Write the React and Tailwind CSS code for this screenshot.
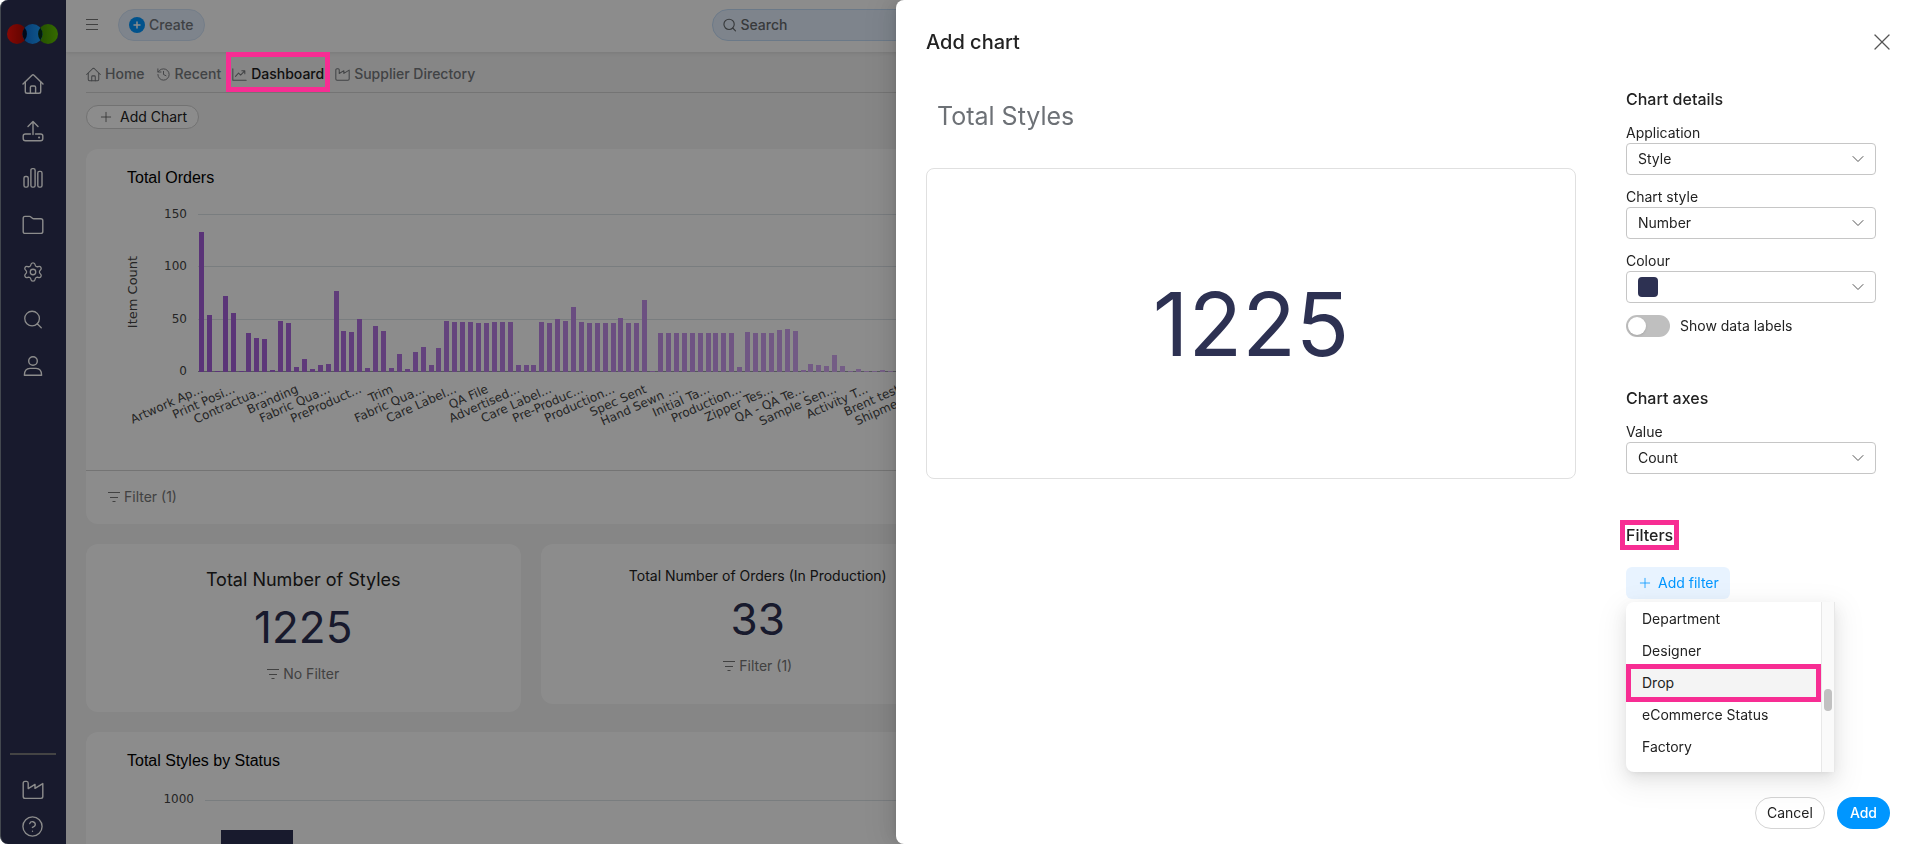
import { ChevronDown, CircleHelp, History, Plus, Search, Settings, X } from 'lucide-react'

const ORDER_COUNTS = [
  133, 54, 1, 72, 56, 1, 37, 32, 31, 2, 49, 47, 5, 12, 3, 7, 8, 77, 39, 38, 50, 4,
  44, 39, 4, 17, 3, 19, 24, 7, 23, 49, 48, 48, 48, 47, 47, 48, 48, 48, 7, 7, 7, 48,
  47, 50, 49, 62, 48, 47, 47, 47, 47, 51, 47, 47, 69, 1, 37, 37, 37, 37, 37, 37, 37,
  37, 37, 37, 5, 38, 37, 37, 37, 40, 41, 39, 2, 8, 7, 6, 16, 6, 1, 3, 0, 0, 2, 0, 0,
]

// every fourth bar gets a label
const ORDER_LABELS = [
  'Artwork Ap...', 'Print Posi...', 'Contractua...', 'Branding', 'Fabric Qua...',
  'PreProduct...', 'Trim', 'Fabric Qua...', 'Care Label...', 'QA File',
  'Advertised...', 'Care Label...', 'Pre-Produc...', 'Production...', 'Spec Sent',
  'Hand Sewn ...', 'Initial Ta...', 'Production...', 'Zipper Tes...', 'QA - QA Te...',
  'Sample Sen...', 'Activity T...', 'Brent test', 'Shipment D...',
]

const FILTER_OPTIONS = ['Department', 'Designer', 'Drop', 'eCommerce Status', 'Factory']

function Icon({ size = 22, stroke = 1.4, className, children }) {
  return (
    <svg
      width={size}
      height={size}
      viewBox="0 0 22 22"
      fill="none"
      stroke="currentColor"
      strokeWidth={stroke}
      strokeLinecap="round"
      strokeLinejoin="round"
      className={className}
      aria-hidden="true"
    >
      {children}
    </svg>
  )
}

function HomeIcon(props) {
  return (
    <Icon {...props}>
      <path d="M1 11 L10 2.2 Q11 1.4 12 2.2 L21 11" />
      <path d="M3.3 9 V18.5 Q3.3 20.3 5.1 20.3 H16.9 Q18.7 20.3 18.7 18.5 V9" />
      <path d="M8.4 20 V14.3 Q8.4 13 9.7 13 H12.3 Q13.6 13 13.6 14.3 V20" />
    </Icon>
  )
}

function UploadIcon(props) {
  return (
    <Icon {...props}>
      <path d="M11 14.5 V2 M6 6.5 L11 1.5 L16 6.5" />
      <path d="M8.5 14 H3.5 Q1.2 14 1.2 16 V18.5 Q1.2 20.8 3.5 20.8 H18.5 Q20.8 20.8 20.8 18.5 V16 Q20.8 14 18.5 14 H13.5" />
      <path d="M17 17.4 h.1" strokeWidth="2" />
    </Icon>
  )
}

function BarsIcon(props) {
  return (
    <Icon {...props}>
      <rect x="2" y="9.5" width="4.2" height="10.6" rx="1.6" />
      <rect x="8.9" y="1.6" width="4.2" height="18.5" rx="1.6" />
      <rect x="15.8" y="4.4" width="4.2" height="15.7" rx="1.6" />
    </Icon>
  )
}

function FolderIcon(props) {
  return (
    <Icon {...props}>
      <path d="M1.2 4.2 Q1.2 2.4 3 2.4 H7.6 Q8.3 2.4 8.9 3 L10.4 4.2 Q11 4.7 11.8 4.7 H18.8 Q20.8 4.7 20.8 6.6 V17.4 Q20.8 19.4 18.8 19.4 H3.2 Q1.2 19.4 1.2 17.4 Z" />
    </Icon>
  )
}

function UserIcon(props) {
  return (
    <Icon {...props}>
      <circle cx="11" cy="6" r="4.3" />
      <path d="M2.4 20.2 Q2.4 13.4 8 13.4 H14 Q19.6 13.4 19.6 20.2 Z" />
    </Icon>
  )
}

function FactoryIcon(props) {
  return (
    <Icon {...props}>
      <path d="M1.2 4.2 Q1.2 2.4 3 2.4 H4.6 Q6.2 2.4 6.2 4.2 V9.6 L13 5.4 V9.4 L20.8 4.6 V17.6 Q20.8 19.4 19 19.4 H3 Q1.2 19.4 1.2 17.6 Z" />
    </Icon>
  )
}

function TrendIcon(props) {
  return (
    <Icon {...props}>
      <path d="M1.2 2.5 V19.4 H20.8" />
      <path d="M5.2 13.8 L9.6 8.8 L12.6 11.8 L18.6 5.6 M14.4 5.4 H18.8 V9.8" />
    </Icon>
  )
}

function FilterIcon() {
  return (
    <svg width="12" height="11" viewBox="0 0 12 11" stroke="currentColor" aria-hidden="true">
      <path d="M0 .5 H12 M2 5.5 H10 M4.5 9.5 H7.5" fill="none" />
    </svg>
  )
}

function Logo() {
  return (
    <svg width="52" height="20" viewBox="0 0 52 20" role="img" aria-label="Logo">
      <defs>
        <linearGradient id="red"><stop offset="0" stopColor="#f5100a" /><stop offset="1" stopColor="#a80800" /></linearGradient>
        <linearGradient id="blue"><stop offset="0" stopColor="#0a6fd8" /><stop offset="1" stopColor="#1fa0ff" /></linearGradient>
        <linearGradient id="green"><stop offset="0" stopColor="#3f8f00" /><stop offset="1" stopColor="#62c400" /></linearGradient>
      </defs>
      <circle cx="10" cy="10" r="10" fill="url(#red)" />
      <circle cx="41" cy="10" r="10" fill="url(#green)" />
      <circle cx="25.5" cy="10" r="10" fill="url(#blue)" />
      <path d="M17.7 3.7 A10 10 0 0 1 17.7 16.3 A10 10 0 0 1 17.7 3.7Z" fill="#04102c" />
      <path d="M33.3 3.7 A10 10 0 0 1 33.3 16.3 A10 10 0 0 1 33.3 3.7Z" fill="#04301c" />
    </svg>
  )
}

function Sidebar() {
  const items = [
    ['Home', <HomeIcon />],
    ['Upload', <UploadIcon />],
    ['Reports', <BarsIcon />],
    ['Files', <FolderIcon />],
    ['Settings', <Settings size={22} strokeWidth={1.4} />],
    ['Search', <Search size={23} strokeWidth={1.4} />],
    ['Account', <UserIcon />],
  ]
  return (
    <nav className="flex w-[66px] shrink-0 flex-col items-center rounded-l-lg border-l border-[#7a8490] bg-[#2d3152] pt-6 pr-0.5 text-white">
      <Logo />
      <div className="mt-[29px] flex flex-col gap-[25px]">
        {items.map(([label, icon]) => (
          <a key={label} href="#" aria-label={label} className="flex size-[22px] items-center justify-center">{icon}</a>
        ))}
      </div>
      <div className="mt-auto flex w-full flex-col items-center pb-1.5">
        <hr className="w-[46px] border-t-2 border-[#7c7c7c]" />
        <a href="#" aria-label="Suppliers" className="mt-6"><FactoryIcon /></a>
        <a href="#" aria-label="Help" className="mt-3.5"><CircleHelp size={23} strokeWidth={1.4} /></a>
      </div>
    </nav>
  )
}

function TopBar() {
  return (
    <header className="grid h-[52px] shrink-0 grid-cols-[1fr_562px_1fr] items-center bg-white px-5 pb-0.5 shadow-[0_1px_4px_rgba(0,0,0,0.1)]">
      <div className="flex items-center gap-5">
        <button aria-label="Menu" className="text-[#777]">
          <svg width="12" height="12" viewBox="0 0 12 12" stroke="currentColor"><path d="M0 .5 H12 M0 5.5 H12 M0 10.5 H12" /></svg>
        </button>
        <button className="flex h-8 items-center gap-1 rounded-full border border-[#d3e4f8] bg-[#e6f1ff] px-2.5 text-sm font-medium text-[#73777c]">
          <svg width="16" height="16" viewBox="0 0 16 16" aria-hidden="true">
            <circle cx="8" cy="8" r="8" fill="#0096ff" />
            <path d="M8 5 V11 M5 8 H11" stroke="#fff" strokeWidth="1.5" strokeLinecap="round" />
          </svg>
          Create
        </button>
      </div>
      <label className="flex h-8 items-center gap-[3px] rounded-full border border-[#c4ddf8] bg-[#e6f1ff] px-[9px] text-[#666a6e]">
        <Search size={16} strokeWidth={1.8} />
        <input type="search" aria-label="Search" placeholder="Search" className="w-full bg-transparent text-sm outline-none placeholder:font-medium placeholder:text-[#666a6e]" />
      </label>
    </header>
  )
}

function Tabs() {
  const tab = 'flex items-center gap-1'
  return (
    <nav className="mr-4 flex h-[41px] items-center gap-[11px] border-b border-[#d4d4d4] pt-1 text-sm font-medium text-[#777a7e]">
      <a href="#" className={tab}><HomeIcon size={15} stroke={1.5} />Home</a>
      <a href="#" className={tab}><History size={15} strokeWidth={1.5} />Recent</a>
      <a href="#" aria-current="page" className="relative flex items-center gap-1">
        <TrendIcon size={15} stroke={1.5} />
        <span className="text-[#1c1c1c]">Dashboard</span>
        <span className="absolute -inset-x-1.5 -top-3 -bottom-2 z-20 border-5 border-[#f72d93]" />
      </a>
      <a href="#" className={tab}><FactoryIcon size={15} stroke={1.5} />Supplier Directory</a>
    </nav>
  )
}

// mixes the first and last bar colour by position
function barColor(i) {
  const t = i / (ORDER_COUNTS.length - 1)
  const mix = (a, b) => Math.round(a + (b - a) * t)
  return `rgb(${mix(165, 216)}, ${mix(94, 176)}, ${mix(218, 246)})`
}

function OrdersChart() {
  const zero = 173
  const unit = 1.05
  return (
    <svg width="900" height="271" viewBox="0 0 900 271" className="block font-['DejaVu_Sans',sans-serif] text-xs" fill="#444">
      {[0, 50, 100, 150].map(v => {
        const y = Math.round(zero - v * unit) - 0.5
        return (
          <g key={v}>
            <line x1="112" x2="900" y1={y} y2={y} stroke={v ? '#dde3e8' : '#9aa0a6'} />
            <text x="101" y={y + 3} textAnchor="end">{v}</text>
          </g>
        )
      })}
      {ORDER_COUNTS.map((v, i) => {
        const h = Math.round(Math.max(v, 0.7) * unit)
        return <rect key={i} x={Math.round(113 + i * 7.915)} y={zero - h} width="5" height={h} fill={barColor(i)} />
      })}
      {ORDER_LABELS.map((label, i) => (
        <text key={i} textAnchor="end" transform={`translate(${118 + i * 31.66} 193) rotate(-24)`}>{label}</text>
      ))}
      <text textAnchor="middle" fontSize="13" transform="translate(51 93) rotate(-90)">Item Count</text>
    </svg>
  )
}

function StatusChart() {
  return (
    <svg width="900" height="120" viewBox="0 0 900 120" className="block font-['DejaVu_Sans',sans-serif] text-xs" fill="#444">
      <text x="108" y="21" textAnchor="end">1000</text>
      <line x1="119" x2="900" y1="18.5" y2="18.5" stroke="#dde3e8" />
      <rect x="135" y="48" width="72" height="80" fill="#2d3152" />
    </svg>
  )
}

function FilterLink({ children }) {
  return (
    <button className="flex items-center gap-1 text-sm leading-[22px] text-[#777]">
      <FilterIcon />
      {children}
    </button>
  )
}

function NumberCard({ title, titleClass, value, filter }) {
  return (
    <section className="flex flex-col items-center rounded-xl bg-white pt-[21px] pb-[27px] text-[#222]">
      <h2 className={titleClass}>{title}</h2>
      <p className="text-[44px] leading-16 text-[#2d3152]">{value}</p>
      <div className="pt-1"><FilterLink>{filter}</FilterLink></div>
    </section>
  )
}

function Dashboard() {
  const chartTitle = "px-[41px] pt-[17px] pb-[9px] font-['Liberation_Sans',sans-serif] text-base text-black"
  return (
    <main className="flex min-w-0 flex-1 flex-col bg-[#f4f4f4]">
      <TopBar />
      <div className="min-h-0 flex-1 overflow-hidden pl-5">
        <Tabs />
        <button className="mt-3 flex h-6 items-center gap-1.5 rounded-full border border-[#d0d0d0] bg-white px-[11px] text-sm text-[#222]">
          <Plus size={16} strokeWidth={1.2} className="text-[#555]" />
          Add Chart
        </button>

        <div className="mt-5 mr-9 space-y-5">
          <section className="overflow-hidden rounded-xl bg-white">
            <h2 className={chartTitle}>Total Orders</h2>
            <OrdersChart />
            <div className="border-t border-[#d4d4d4] px-[22px] pt-[15px] pb-4">
              <FilterLink>Filter (1)</FilterLink>
            </div>
          </section>

          <div className="grid grid-cols-4 items-start gap-5">
            <NumberCard title="Total Number of Styles" titleClass="text-lg leading-[30px]" value="1225" filter="No Filter" />
            <NumberCard title="Total Number of Orders (In Production)" titleClass="text-sm leading-[22px]" value="33" filter="Filter (1)" />
          </div>

          <section className="rounded-xl bg-white">
            <h2 className={chartTitle}>Total Styles by Status</h2>
            <StatusChart />
          </section>
        </div>
      </div>
    </main>
  )
}

function SelectField({ id, label, value, swatch }) {
  return (
    <div className="flex flex-col">
      <label htmlFor={id} className="text-sm">{label}</label>
      <div className="relative">
        <select id={id} className="h-8 w-full appearance-none rounded-sm border border-[#c6c6c6] bg-white px-[11px] text-sm">
          <option>{value}</option>
        </select>
        {swatch && <span className="absolute top-1.5 left-3 size-5 rounded-sm bg-[#2d3152]" />}
        <ChevronDown size={20} strokeWidth={1.2} className="pointer-events-none absolute top-1.5 right-2 text-[#555]" />
      </div>
    </div>
  )
}

function FilterMenu() {
  return (
    <div className="absolute top-full left-0 mt-[3px] flex h-[170px] w-[209px] overflow-hidden rounded-l-lg bg-white shadow-[0_6px_16px_rgba(0,0,0,0.08),0_3px_6px_-4px_rgba(0,0,0,0.12),0_9px_28px_8px_rgba(0,0,0,0.05)]">
      <ul role="menu" className="flex-1 pt-px text-sm">
        {FILTER_OPTIONS.map(name => (
          <li key={name} role="menuitem" className={name === 'Drop' ? 'relative flex h-8 items-center bg-[#f4f4f4] px-4' : 'flex h-8 items-center px-4'}>
            {name}
            {name === 'Drop' && <span className="absolute inset-x-0 -inset-y-[3px] border-5 border-[#f72d93]" />}
          </li>
        ))}
      </ul>
      <div className="w-[14px] border-x border-[#e8e8e8] bg-[#fafafa] pt-[87px]">
        <div className="mx-auto h-[22px] w-2 rounded-full bg-[#c1c1c1]" />
      </div>
    </div>
  )
}

function AddChartDrawer() {
  const heading = 'text-base font-medium leading-6'
  return (
    <aside className="fixed inset-y-0 right-0 z-30 flex w-[1024px] max-w-full flex-col rounded-l-lg bg-white text-[#222] shadow-[-6px_0_16px_rgba(0,0,0,0.08),-3px_0_6px_-4px_rgba(0,0,0,0.12),-9px_0_28px_8px_rgba(0,0,0,0.05)]">
      <div className="flex h-[84px] items-center justify-between pr-6 pl-[30px]">
        <h1 className="text-xl font-medium">Add chart</h1>
        <button aria-label="Close" className="text-[#555]"><X size={28} strokeWidth={1.1} /></button>
      </div>

      <div className="flex flex-1 gap-[50px] pt-[3px] pr-11 pl-[30px]">
        <div className="min-w-0 flex-1">
          <input aria-label="Chart title" defaultValue="Total Styles" className="h-[60px] w-full px-[11px] pb-0.5 text-[25px] text-[#6d7176] outline-none" />
          <div className="mt-[21px] flex h-[311px] items-center justify-center rounded-lg border border-[#e0e0e0] text-[88px] text-[#2d3152]">
            1225
          </div>
        </div>

        <form className="flex w-[250px] flex-col gap-[49px]">
          <section className="flex flex-col gap-3">
            <h2 className={heading}>Chart details</h2>
            <SelectField id="application" label="Application" value="Style" />
            <SelectField id="chart-style" label="Chart style" value="Number" />
            <SelectField id="colour" label="Colour" value="" swatch />
            <label className="flex items-center gap-2.5 text-sm leading-[22px]">
              <input
                type="checkbox"
                role="switch"
                className="h-[22px] w-11 appearance-none rounded-full bg-[#bfbfbf] p-0.5 before:block before:size-[18px] before:rounded-full before:bg-white before:shadow-sm"
              />
              Show data labels
            </label>
          </section>

          <section className="flex flex-col gap-3">
            <h2 className={heading}>Chart axes</h2>
            <SelectField id="value" label="Value" value="Count" />
          </section>

          <section className="flex flex-col items-start gap-5">
            <h2 className="relative text-base leading-6 font-medium">
              Filters
              <span className="absolute -inset-x-1.5 -inset-y-[3px] border-5 border-[#f72d93]" />
            </h2>
            <div className="relative">
              <button type="button" className="flex h-8 items-center gap-[5px] rounded-md bg-[#e8f3ff] px-[11px] text-sm text-[#0096ff]">
                <Plus size={16} strokeWidth={1.2} />
                Add filter
              </button>
              <FilterMenu />
            </div>
          </section>
        </form>
      </div>

      <div className="flex justify-end gap-3 pr-[30px] pb-[15px] text-sm">
        <button className="h-8 rounded-full border border-[#d4d4d4] px-[11px]">Cancel</button>
        <button className="h-8 rounded-full bg-[#0096ff] px-[13px] font-medium text-white">Add</button>
      </div>
    </aside>
  )
}

export default function App() {
  return (
    <div className="h-screen overflow-hidden bg-white font-['Inter',sans-serif]">
      <div className="flex h-full">
        <Sidebar />
        <Dashboard />
      </div>
      <div className="fixed inset-0 z-10 rounded-l-lg bg-black/45" />
      <AddChartDrawer />
    </div>
  )
}
